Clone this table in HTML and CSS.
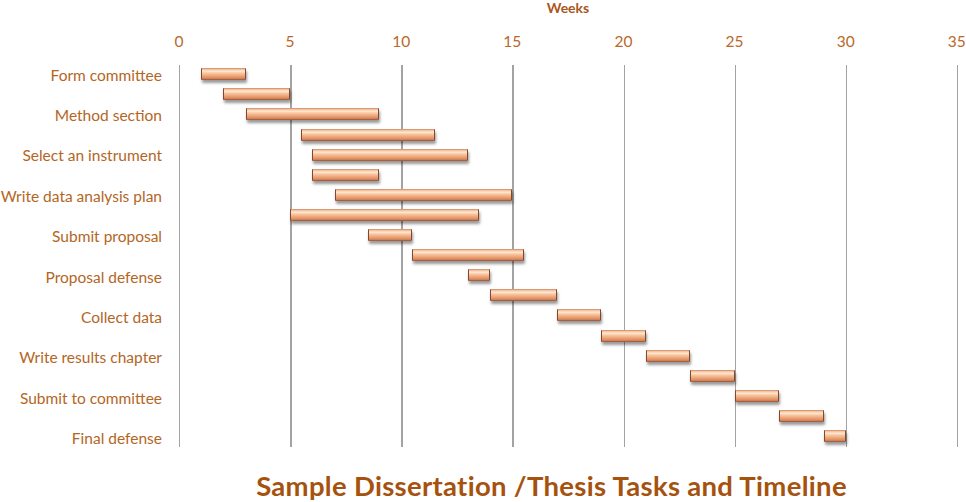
FILE: index.html
```html
<!DOCTYPE html>
<html>
<head>
<meta charset="utf-8">
<link rel="stylesheet" href="styles.css">
</head>
<body>
<div class="page">
  <div class="weeks">Weeks</div>
  <div class="axis">
    <span class="tick">0</span><span class="tick">5</span><span class="tick">10</span><span class="tick">15</span><span class="tick">20</span><span class="tick">25</span><span class="tick">30</span><span class="tick">35</span>
  </div>
  <div class="chart">
    <div class="labels">
      <div class="label">Form committee</div>
      <div class="label">Method section</div>
      <div class="label">Select an instrument</div>
      <div class="label">Write data analysis plan</div>
      <div class="label">Submit proposal</div>
      <div class="label">Proposal defense</div>
      <div class="label">Collect data</div>
      <div class="label">Write results chapter</div>
      <div class="label">Submit to committee</div>
      <div class="label">Final defense</div>
    </div>
    <div class="plot">
      <div class="row"><div class="bar" style="margin-left:22.23px;width:44.46px"></div></div>
      <div class="row"><div class="bar" style="margin-left:44.46px;width:66.68px"></div></div>
      <div class="row"><div class="bar" style="margin-left:66.68px;width:133.37px"></div></div>
      <div class="row"><div class="bar" style="margin-left:122.25px;width:133.37px"></div></div>
      <div class="row"><div class="bar" style="margin-left:133.37px;width:155.6px"></div></div>
      <div class="row"><div class="bar" style="margin-left:133.37px;width:66.68px"></div></div>
      <div class="row"><div class="bar" style="margin-left:155.6px;width:177.82px"></div></div>
      <div class="row"><div class="bar" style="margin-left:111.14px;width:188.94px"></div></div>
      <div class="row"><div class="bar" style="margin-left:188.94px;width:44.46px"></div></div>
      <div class="row"><div class="bar" style="margin-left:233.4px;width:111.14px"></div></div>
      <div class="row"><div class="bar" style="margin-left:288.96px;width:22.23px"></div></div>
      <div class="row"><div class="bar" style="margin-left:311.19px;width:66.68px"></div></div>
      <div class="row"><div class="bar" style="margin-left:377.88px;width:44.46px"></div></div>
      <div class="row"><div class="bar" style="margin-left:422.33px;width:44.46px"></div></div>
      <div class="row"><div class="bar" style="margin-left:466.79px;width:44.46px"></div></div>
      <div class="row"><div class="bar" style="margin-left:511.24px;width:44.46px"></div></div>
      <div class="row"><div class="bar" style="margin-left:555.7px;width:44.46px"></div></div>
      <div class="row"><div class="bar" style="margin-left:600.16px;width:44.46px"></div></div>
      <div class="row"><div class="bar" style="margin-left:644.61px;width:22.23px"></div></div>
    </div>
  </div>
  <div class="title">Sample Dissertation /Thesis Tasks and Timeline</div>
</div>
</body>
</html>
```

FILE: styles.css
```css
html, body {
  margin: 0;
  padding: 0;
  background: #ffffff;
}
body {
  width: 966px;
  height: 502px;
  overflow: hidden;
  font-family: Lato, "Liberation Sans", sans-serif;
}
.page {
  width: 966px;
}
.weeks {
  margin-left: 179px;
  width: 778px;
  height: 16px;
  line-height: 16px;
  text-align: center;
  font-size: 14px;
  font-weight: 700;
  color: #a9561a;
}
.axis {
  display: flex;
  margin-top: 15px;
  margin-left: 123.43px;
  height: 20px;
  line-height: 20px;
}
.tick {
  flex: 0 0 111.14px;
  text-align: center;
  font-size: 15.5px;
  color: #b8692b;
}
.chart {
  display: grid;
  grid-template-columns: 179px 780px;
  align-items: start;
  margin-top: 13.8px;
}
.labels {
  display: flex;
  flex-direction: column;
}
.label {
  height: 40.35px;
  line-height: 20.6px;
  padding-right: 17px;
  text-align: right;
  font-size: 15.5px;
  color: #b4661f;
  white-space: nowrap;
}
.label:last-child {
  height: 20.1px;
}
.plot {
  display: flex;
  flex-direction: column;
  background: repeating-linear-gradient(to right, #a3a3a3 0, #a3a3a3 1.5px, transparent 1.5px, transparent 111.14px);
}
.row {
  height: 20.1px;
  padding-top: 3.5px;
  box-sizing: border-box;
}
.bar {
  height: 12px;
  box-sizing: border-box;
  border-left: 1px solid #84472e;
  border-right: 1px solid #84472e;
  border-radius: 1px;
  background: linear-gradient(to bottom, #cf8360 0%, #f7cbaa 14%, #fee6cd 28%, #f7c39d 45%, #eea478 66%, #d9885d 86%, #8f4f33 100%);
  box-shadow: 1px 3px 3px rgba(0, 0, 0, 0.4);
}
.title {
  margin-top: 22px;
  padding-left: 137px;
  height: 32px;
  line-height: 32px;
  text-align: center;
  font-size: 27.5px;
  letter-spacing: 0.3px;
  font-weight: 700;
  color: #a6520f;
  white-space: nowrap;
}
```
